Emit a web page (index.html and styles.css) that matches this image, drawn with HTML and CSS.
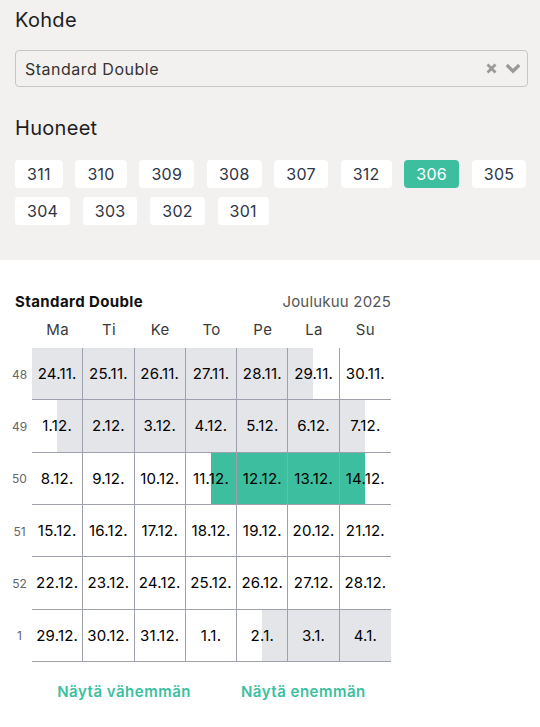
FILE: index.html
```html
<!DOCTYPE html>
<html lang="fi">
<head>
<meta charset="utf-8">
<title>Kohde</title>
<link rel="stylesheet" href="styles.css">
</head>
<body>
<section class="filters">
  <h2 class="heading heading-first">Kohde</h2>
  <div class="select">
    <span class="select-value">Standard Double</span>
    <span class="select-icons">
      <svg class="icon-clear" width="11" height="11" viewBox="0 0 11 11"><path d="M1.5 1.5 L9.5 9.5 M9.5 1.5 L1.5 9.5" stroke="#999" stroke-width="2.8" fill="none"/></svg>
      <svg class="icon-chevron" width="16" height="11" viewBox="0 0 16 11"><path d="M1.8 2 L8 8.2 L14.2 2" stroke="#999" stroke-width="3.2" fill="none"/></svg>
    </span>
  </div>
  <h2 class="heading heading-rooms">Huoneet</h2>
  <div class="rooms">
    <button class="room">311</button>
    <button class="room">310</button>
    <button class="room">309</button>
    <button class="room">308</button>
    <button class="room">307</button>
    <button class="room">312</button>
    <button class="room active">306</button>
    <button class="room">305</button>
    <button class="room">304</button>
    <button class="room">303</button>
    <button class="room">302</button>
    <button class="room">301</button>
  </div>
</section>

<section class="calendar">
  <div class="cal-title">
    <span class="cal-name">Standard Double</span>
    <span class="cal-month">Joulukuu 2025</span>
  </div>
  <div class="cal-days">
    <span></span><span>Ma</span><span>Ti</span><span>Ke</span><span>To</span><span>Pe</span><span>La</span><span>Su</span>
  </div>
  <div class="cal-grid">
    <div class="week">48</div>
    <div class="cell busy">24.11.</div>
    <div class="cell busy">25.11.</div>
    <div class="cell busy">26.11.</div>
    <div class="cell busy">27.11.</div>
    <div class="cell busy">28.11.</div>
    <div class="cell busy-end">29.11.</div>
    <div class="cell">30.11.</div>

    <div class="week">49</div>
    <div class="cell busy-start">1.12.</div>
    <div class="cell busy">2.12.</div>
    <div class="cell busy">3.12.</div>
    <div class="cell busy">4.12.</div>
    <div class="cell busy">5.12.</div>
    <div class="cell busy">6.12.</div>
    <div class="cell busy-end">7.12.</div>

    <div class="week">50</div>
    <div class="cell">8.12.</div>
    <div class="cell">9.12.</div>
    <div class="cell">10.12.</div>
    <div class="cell sel-start">11.12.</div>
    <div class="cell sel">12.12.</div>
    <div class="cell sel">13.12.</div>
    <div class="cell sel-end">14.12.</div>

    <div class="week">51</div>
    <div class="cell">15.12.</div>
    <div class="cell">16.12.</div>
    <div class="cell">17.12.</div>
    <div class="cell">18.12.</div>
    <div class="cell">19.12.</div>
    <div class="cell">20.12.</div>
    <div class="cell">21.12.</div>

    <div class="week">52</div>
    <div class="cell">22.12.</div>
    <div class="cell">23.12.</div>
    <div class="cell">24.12.</div>
    <div class="cell">25.12.</div>
    <div class="cell">26.12.</div>
    <div class="cell">27.12.</div>
    <div class="cell">28.12.</div>

    <div class="week">1</div>
    <div class="cell">29.12.</div>
    <div class="cell">30.12.</div>
    <div class="cell">31.12.</div>
    <div class="cell">1.1.</div>
    <div class="cell busy-start">2.1.</div>
    <div class="cell busy">3.1.</div>
    <div class="cell busy">4.1.</div>
  </div>
  <div class="cal-links">
    <a class="cal-link" href="#">Näytä vähemmän</a>
    <a class="cal-link" href="#">Näytä enemmän</a>
  </div>
</section>
</body>
</html>
```

FILE: styles.css
```css
* { box-sizing: border-box; }

html, body {
  margin: 0;
  padding: 0;
  background: #ffffff;
  font-family: Inter, "Noto Sans", "DejaVu Sans", sans-serif;
  color: #222;
}

.filters {
  background: #f2f1f0;
  padding: 8px 0 35px 15px;
  height: 260px;
}

.heading {
  margin: 0;
  font-size: 20px;
  line-height: 24px;
  font-weight: 400;
  color: #1d1d1f;
  letter-spacing: 0.3px;
}

.select {
  margin: 18px 12px 0 0;
  height: 37px;
  border: 1px solid #c6c6c6;
  border-radius: 4px;
  display: flex;
  align-items: center;
  justify-content: space-between;
  padding: 0 6px 0 9px;
}

.select-value {
  font-size: 16px;
  color: #333;
  letter-spacing: 0.5px;
}

.select-icons {
  display: flex;
  align-items: center;
  gap: 8px;
}

.icon-clear, .icon-chevron { display: block; }

.heading-rooms {
  margin-top: 29px;
}

.rooms {
  margin-top: 20px;
  display: flex;
  flex-wrap: wrap;
  column-gap: 12.8px;
  row-gap: 9px;
}

.room {
  height: 28px;
  padding: 0 12px;
  border: none;
  border-radius: 4px;
  background: #ffffff;
  font-family: inherit;
  font-size: 16px;
  letter-spacing: 0.25px;
  color: #2e3546;
  line-height: 28px;
}

.room.active {
  background: #3dbf9f;
  color: #ffffff;
}

.calendar {
  width: 391px;
  padding-top: 32px;
}

.cal-title {
  display: flex;
  justify-content: space-between;
  align-items: baseline;
  padding-left: 15px;
  line-height: 20px;
}

.cal-name {
  font-size: 15px;
  font-weight: 700;
  letter-spacing: 0.4px;
  color: #111;
}

.cal-month {
  font-size: 15px;
  letter-spacing: 0.2px;
  color: #555;
}

.cal-days {
  margin-top: 8px;
  display: grid;
  grid-template-columns: 32px repeat(7, 1fr);
  height: 28px;
  font-size: 15px;
  line-height: 20px;
  letter-spacing: 0.3px;
  color: #3a3a3a;
  text-align: center;
}

.cal-grid {
  display: grid;
  grid-template-columns: 32px repeat(7, 1fr);
  grid-template-rows: repeat(6, 52.33px);
}

.week {
  font-size: 12px;
  color: #666;
  display: flex;
  align-items: center;
  justify-content: center;
  padding-left: 7px;
}

.cell {
  display: flex;
  align-items: center;
  justify-content: center;
  font-size: 15px;
  font-weight: 400;
  letter-spacing: 0.2px;
  color: #000;
  border-right: 1px solid #9ea1ad;
  border-bottom: 1px solid #9ea1ad;
}

.cell:nth-child(8n) { border-right: none; }

.busy { background: #e4e5e9; }
.busy-start { background: linear-gradient(to right, transparent 50%, #e4e5e9 50%); }
.busy-end { background: linear-gradient(to right, #e4e5e9 50%, transparent 50%); }

.sel { background: #3dbf9f; }
.sel-start { background: linear-gradient(to right, transparent 50%, #3dbf9f 50%); }
.sel-end { background: linear-gradient(to right, #3dbf9f 50%, transparent 50%); }

.cal-links {
  margin-left: 32px;
  margin-top: 20px;
  display: flex;
  justify-content: center;
  gap: 50px;
  line-height: 20px;
}

.cal-link {
  font-size: 15px;
  font-weight: 600;
  letter-spacing: 0.5px;
  color: #3dbf9f;
  text-decoration: none;
}
```
